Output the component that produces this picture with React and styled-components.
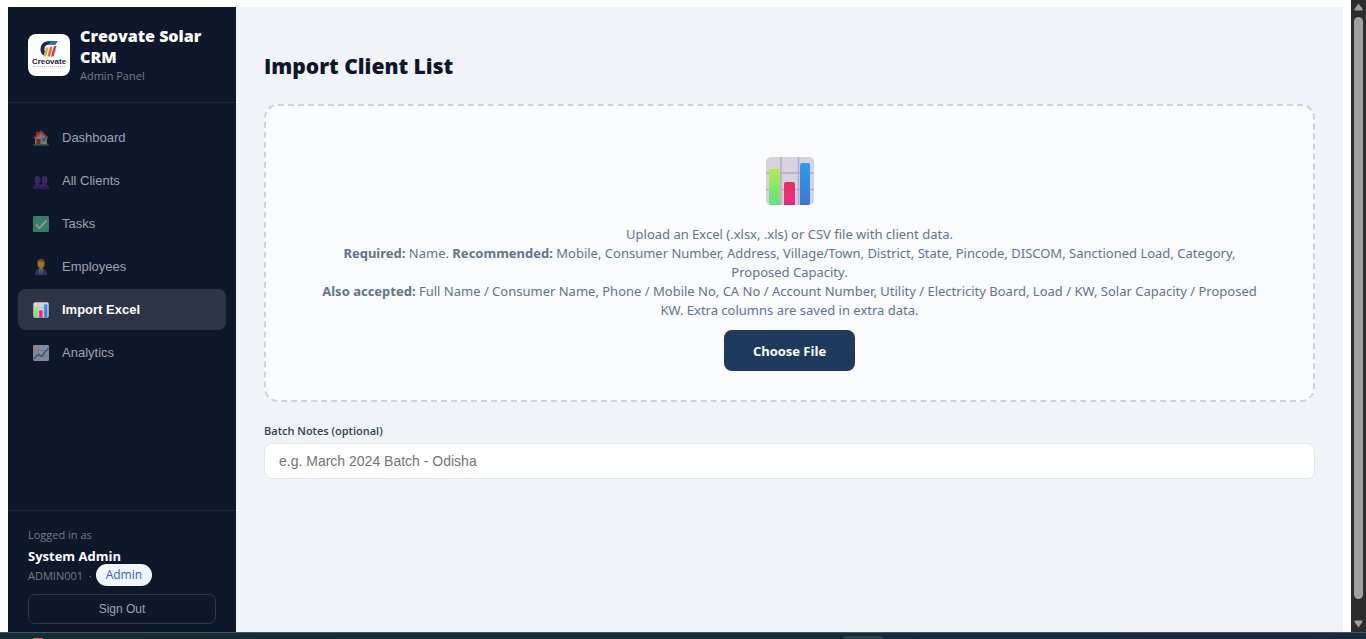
import { useRef, useState } from "react";
import styled, { createGlobalStyle } from "styled-components";

const menu = [
  { name: "Dashboard", icon: HouseIcon },
  { name: "All Clients", icon: ClientsIcon },
  { name: "Tasks", icon: CheckIcon },
  { name: "Employees", icon: EmployeeIcon },
  { name: "Import Excel", icon: BarsIcon },
  { name: "Analytics", icon: TrendIcon },
]

export default function App() {
  const [active, setActive] = useState("Import Excel")
  const [notes, setNotes] = useState("")
  const fileInput = useRef(null)

  return (
    <Screen>
      <GlobalStyle />
      <Viewport>
        <Page>
          <Sidebar>
            <Brand>
              <Logo />
              <div>
                <BrandName>Creovate Solar CRM</BrandName>
                <SmallText>Admin Panel</SmallText>
              </div>
            </Brand>

            <Nav>
              {menu.map(({ name, icon: Icon }) => (
                <NavButton key={name} $active={name === active} onClick={() => setActive(name)}>
                  <Icon />
                  {name}
                </NavButton>
              ))}
            </Nav>

            <UserBox>
              <SmallText>Logged in as</SmallText>
              <UserName>System Admin</UserName>
              <UserRole>
                ADMIN001 &nbsp;· <Badge>Admin</Badge>
              </UserRole>
              <SignOut>Sign Out</SignOut>
            </UserBox>
          </Sidebar>

          <Main>
            <Title>Import Client List</Title>
            <DropZone>
              <BarsIcon size={50} />
              <Help>
                Upload an Excel (.xlsx, .xls) or CSV file with client data.
                <br />
                <strong>Required:</strong> Name. <strong>Recommended:</strong> Mobile, Consumer Number, Address,
                Village/Town, District, State, Pincode, DISCOM, Sanctioned Load, Category, Proposed Capacity.
                <br />
                <strong>Also accepted:</strong> Full Name / Consumer Name, Phone / Mobile No, CA No / Account Number,
                Utility / Electricity Board, Load / KW, Solar Capacity / Proposed KW. Extra columns are saved in extra
                data.
              </Help>
              <ChooseButton onClick={() => fileInput.current.click()}>Choose File</ChooseButton>
              <input ref={fileInput} type="file" accept=".xlsx,.xls,.csv" hidden />
            </DropZone>

            <Label htmlFor="notes">Batch Notes (optional)</Label>
            <NotesInput
              id="notes"
              type="text"
              placeholder="e.g. March 2024 Batch - Odisha"
              value={notes}
              onChange={(e) => setNotes(e.target.value)}
            />
          </Main>
        </Page>

        <Scrollbar>
          <Arrow d="M4.500 .5 L8.500 6 Q9 7.500 7.500 7.500 H1.500 Q0 7.500 .5 6Z" />
          <Thumb />
          <Arrow d="M4.500 7.500 L.5 2 Q0 .5 1.500 .5 H7.500 Q9 .5 8.500 2Z" />
        </Scrollbar>
      </Viewport>

      <Taskbar>
        <TaskDot />
        <TaskTab />
      </Taskbar>
    </Screen>
  )
}

function Arrow({ d }) {
  return (
    <svg width="9" height="8" viewBox="0 0 9 8" aria-hidden="true">
      <path d={d} fill="#9f9f9f" />
    </svg>
  )
}

function Logo() {
  return (
    <LogoBox>
      <svg width="18" height="16" viewBox="0 0 36 32" aria-hidden="true">
        <path d="M35 0H19C7 0 1 7 1 17c0 5 2 9 6 12l3-7C7 13 11 7 19 7h12Z" fill="#14315c" />
        <path d="M35 0H21l-4 7h14Z" fill="#1c6fb5" />
        <path d="M12 13h5l-5 18H7Z" fill="#f5a524" />
        <path d="M20 11h5l-5 20h-5Z" fill="#f0682a" />
        <path d="M28 10h5l-6 21h-5Z" fill="#d8323a" />
      </svg>
      <LogoName>Creovate</LogoName>
      <LogoLine />
    </LogoBox>
  )
}

function HouseIcon({ size = 16 }) {
  return (
    <svg width={size} height={size} viewBox="0 0 32 32" aria-hidden="true">
      <path d="M6 3h5v8H6Z" fill="#b5483c" />
      <path d="M4 14 16 4l12 10v15H4Z" fill="#f2a578" />
      <path d="M16 1 31 15l-3 3L16 7 4 18l-3-3Z" fill="#e05a43" />
      <path d="M7 18h8v11H7Z" fill="#7d4a4c" />
      <path d="M18 15h8v8h-8Z" fill="#2aa5f0" />
      <path d="M0 29h32v2H0Z" fill="#34b471" />
    </svg>
  )
}

function ClientsIcon({ size = 16 }) {
  return (
    <svg width={size} height={size} viewBox="0 0 32 32" aria-hidden="true">
      <g fill="#573287">
        <ellipse cx="9" cy="14" rx="6" ry="8" />
        <ellipse cx="23" cy="14" rx="6" ry="8" />
        <path d="M6 19h6v4h4v8H0c0-5 2-7 6-8Z" />
        <path d="M20 19h6v4c4 1 6 3 6 8H16v-8h4Z" />
      </g>
      <path d="M0 31c0-3 1-5 3-6h10l3 3 3-3h10c2 1 3 3 3 6Z" fill="#44256f" />
    </svg>
  )
}

function CheckIcon({ size = 16 }) {
  return (
    <svg width={size} height={size} viewBox="0 0 32 32" aria-hidden="true">
      <rect width="32" height="32" rx="2" fill="#4fc783" />
      <path d="m6 17 7 7L27 9" fill="none" stroke="#f3e9f8" strokeWidth="3.500" />
    </svg>
  )
}

function EmployeeIcon({ size = 16 }) {
  return (
    <svg width={size} height={size} viewBox="0 0 32 32" aria-hidden="true">
      <path d="M4 32c0-8 3-12 8-13h8c5 1 8 5 8 13Z" fill="#504177" />
      <path d="m11 18 5 4 5-4-1 9-4 3-4-3Z" fill="#8d7fb5" />
      <path d="M15 21h2l2 9-3 2-3-2Z" fill="#3d6fc4" />
      <path d="M13 15h6v5l-3 3-3-3Z" fill="#d99216" />
      <ellipse cx="16" cy="10" rx="7" ry="8" fill="#f3b52e" />
      <path d="M8 11C7 3 11 0 16 0s9 3 8 11l-2-5c-4 0-7-1-9-2-2 1-4 3-5 7Z" fill="#a4652d" />
    </svg>
  )
}

function BarsIcon({ size = 16 }) {
  return (
    <svg width={size} height={size} viewBox="0 0 50 50" aria-hidden="true">
      <defs>
        <linearGradient id="green" x2="0" y2="1">
          <stop stopColor="#b3ea55" />
          <stop offset="1" stopColor="#62e47e" />
        </linearGradient>
        <linearGradient id="pink" x2="0" y2="1">
          <stop stopColor="#e62f60" />
          <stop offset="0.8" stopColor="#ee2d7b" />
          <stop offset="1" stopColor="#b7358e" />
        </linearGradient>
        <linearGradient id="blue" x2="0" y2="1">
          <stop stopColor="#2c9bed" />
          <stop offset="1" stopColor="#3d78cf" />
        </linearGradient>
      </defs>
      <rect x="1" y="1" width="48" height="48" rx="5" fill="#d8d1df" />
      <path d="M16 1v48M33.500 1v48M1 17h48M1 33.500h48" stroke="#b5adbf" strokeWidth="1.500" />
      <path d="M4 15q0-2 2-2h7q2 0 2 2v34H6q-2 0-2-2Z" fill="url(#green)" />
      <path d="M19 28q0-2 2-2h7q2 0 2 2v21H19Z" fill="url(#pink)" />
      <path d="M35 9q0-2 2-2h6q2 0 2 2v38q0 2-2 2h-8Z" fill="url(#blue)" />
    </svg>
  )
}

function TrendIcon({ size = 16 }) {
  return (
    <svg width={size} height={size} viewBox="0 0 32 32" aria-hidden="true">
      <rect width="32" height="32" rx="2" fill="#d8d0df" />
      <path d="M11 0v32M21 0v32M0 11h32M0 21h32" stroke="#b3aabd" strokeWidth="1" />
      <path d="m1 28 10-9 6 4L31 6" fill="none" stroke="#2e8bdc" strokeWidth="3" />
    </svg>
  )
}

const GlobalStyle = createGlobalStyle`
  * {
    box-sizing: border-box;
  }
  body {
    margin: 0;
    background: #fff;
    font-family: "Segoe UI", "Open Sans", "Noto Sans", sans-serif;
  }
`
const Screen = styled.div`
  display: flex;
  flex-direction: column;
  height: 100vh;
`
const Viewport = styled.div`
  display: flex;
  flex: 1;
  min-height: 0;
`
const Page = styled.div`
  display: flex;
  flex: 1;
  min-width: 0;
  padding: 7px 8px 0;
`
const Sidebar = styled.aside`
  display: flex;
  flex-direction: column;
  flex-shrink: 0;
  width: 228px;
  background: #0f172a;
`
const Brand = styled.div`
  display: flex;
  align-items: center;
  gap: 10px;
  padding: 19px 20px 18px;
  border-bottom: 1px solid #1f273a;
`
const LogoBox = styled.div`
  display: flex;
  flex-direction: column;
  align-items: center;
  flex-shrink: 0;
  width: 42px;
  height: 42px;
  padding-top: 7px;
  border-radius: 8px;
  background: #fff;
`
const LogoName = styled.div`
  margin-top: 1px;
  font-family: "Liberation Sans", Arial, sans-serif;
  font-size: 8px;
  font-weight: 700;
  line-height: 7px;
  color: #1b2540;
`
const LogoLine = styled.div`
  width: 32px;
  margin-top: 1px;
  border-top: 1px dotted #b9c4d0;
`
const BrandName = styled.div`
  font-size: 16px;
  font-weight: 800;
  line-height: 21px;
  color: #fff;
`
const SmallText = styled.div`
  font-size: 11px;
  line-height: 16px;
  color: #747983;
`
const Nav = styled.nav`
  display: flex;
  flex-direction: column;
  flex: 1;
  gap: 2px;
  padding: 14px 10px;
`
const NavButton = styled.button`
  display: flex;
  align-items: center;
  gap: 13px;
  height: 41px;
  padding: 0 15px;
  border: none;
  border-radius: 8px;
  background: ${(props) => (props.$active ? "#2d3446" : "transparent")};
  color: ${(props) => (props.$active ? "#fff" : "#9fa2aa")};
  font-family: "Liberation Sans", Arial, sans-serif;
  font-size: 13px;
  font-weight: ${(props) => (props.$active ? 700 : 400)};
  cursor: pointer;
  svg {
    border-radius: 1px;
    opacity: ${(props) => (props.$active ? 1 : 0.6)};
  }
`
const UserBox = styled.div`
  padding: 16px 20px 8px;
  border-top: 1px solid #1f273a;
`
const UserName = styled.div`
  font-size: 13px;
  font-weight: 700;
  line-height: 26px;
  color: #fff;
`
const UserRole = styled.div`
  display: flex;
  align-items: center;
  gap: 4px;
  height: 12px;
  font-size: 11px;
  color: #747983;
`
const Badge = styled.span`
  padding: 2px 10px;
  border-radius: 11px;
  background: #eff6ff;
  color: #2f5fe8;
  font-size: 12px;
  font-weight: 500;
  line-height: 18px;
`
const SignOut = styled.button`
  width: 100%;
  height: 30px;
  margin-top: 13px;
  border: 1px solid #2f3748;
  border-radius: 7px;
  background: transparent;
  color: #9fa2aa;
  font-family: "Liberation Sans", Arial, sans-serif;
  font-size: 12px;
  cursor: pointer;
`
const Main = styled.main`
  flex: 1;
  min-width: 0;
  padding: 44px 28px 0;
  background: #f0f4f9;
`
const Title = styled.h1`
  margin: 0 0 23px;
  font-size: 21px;
  font-weight: 800;
  line-height: 30px;
  color: #0f172a;
`
const DropZone = styled.div`
  display: flex;
  flex-direction: column;
  align-items: center;
  padding: 50px 52px 29px;
  border: 2px dashed #cbd5e1;
  border-radius: 14px;
  background: #f9fbfd;
`
const Help = styled.p`
  margin: 19px 0 10px;
  font-family: "Noto Sans", sans-serif;
  font-size: 13px;
  line-height: 19px;
  text-align: center;
  color: #64748b;
`
const ChooseButton = styled.button`
  height: 41px;
  padding: 0 29px;
  border: none;
  border-radius: 8px;
  background: #1e3a5f;
  color: #fff;
  font-family: inherit;
  font-size: 13px;
  font-weight: 700;
  cursor: pointer;
`
const Label = styled.label`
  display: block;
  margin-top: 20px;
  font-size: 11px;
  font-weight: 600;
  line-height: 18px;
  color: #374151;
`
const NotesInput = styled.input`
  display: block;
  width: 100%;
  height: 36px;
  margin-top: 3px;
  padding: 0 14px;
  border: 1px solid #e2e8f0;
  border-radius: 8px;
  background: #fff;
  color: #0f172a;
  font-family: "Liberation Sans", Arial, sans-serif;
  font-size: 14px;
  &::placeholder {
    color: #757575;
  }
`
const Scrollbar = styled.div`
  display: flex;
  flex-direction: column;
  align-items: center;
  width: 15px;
  padding: 3px 0 4px;
  background: #2c2c2c;
`
const Thumb = styled.div`
  flex: 1;
  width: 9px;
  margin: 6px 0 21px;
  border-radius: 5px;
  background: #9f9f9f;
`
const Taskbar = styled.div`
  display: flex;
  align-items: flex-end;
  height: 7px;
  padding-left: 33px;
  border-top: 1px solid #46545b;
  background: linear-gradient(to right, #132b33, #152a35 60%, #1a2a3f);
`
const TaskDot = styled.div`
  width: 10px;
  height: 1px;
  border-radius: 5px 5px 0 0;
  background: #d9686c;
`
const TaskTab = styled.div`
  width: 40px;
  height: 3px;
  margin-left: 60%;
  border-radius: 3px 3px 0 0;
  background: #2c3f49;
`
